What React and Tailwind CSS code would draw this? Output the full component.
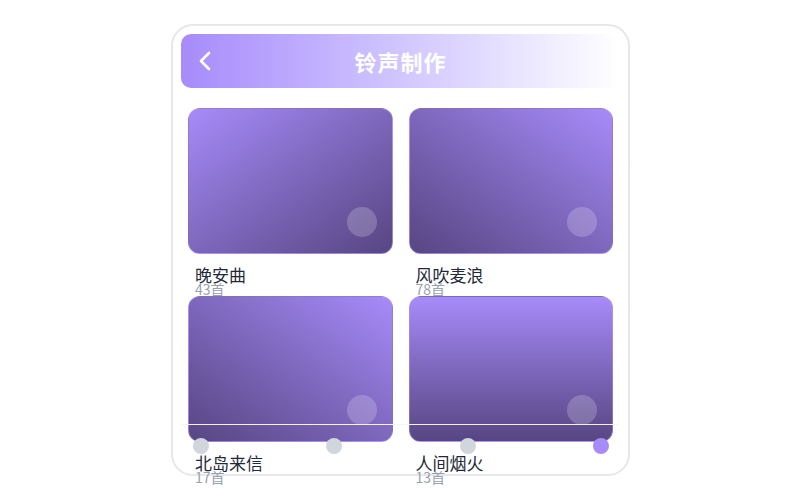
import React from 'react'

const FONT = { fontFamily: '"Noto Sans CJK SC", "Noto Sans", sans-serif' }

const ALBUMS = [
  { name: '晚安曲', count: '43首', bg: 'bg-gradient-to-br from-[#a78bfa] to-[#574683]' },
  { name: '风吹麦浪', count: '78首', bg: 'bg-gradient-to-bl from-[#a78bfa] to-[#574683]' },
  { name: '北岛来信', count: '17首', bg: 'bg-gradient-to-bl from-[#a78bfa] to-[#574683]' },
  { name: '人间烟火', count: '13首', bg: 'bg-gradient-to-b from-[#a78bfa] to-[#574683]' },
]

function AlbumCard({ album }) {
  return (
    <div>
      <div className={`relative h-[146px] rounded-xl border border-[#b9a8ee]/40 ${album.bg}`}>
        <div className="absolute right-[15px] bottom-[16px] w-[30px] h-[30px] rounded-full bg-white/20" />
      </div>
      <div className="pl-[7px] pt-[12px] h-[42px]">
        <div className="text-[17px] leading-[17px] text-gray-800">{album.name}</div>
        <div className="text-[14px] leading-[13px] text-gray-400">{album.count}</div>
      </div>
    </div>
  )
}

export default function App() {
  return (
    <div className="w-[800px] h-[500px] bg-white pt-6" style={FONT}>
      <div className="relative ml-[171px] w-[459px] h-[452px] border-2 border-gray-200 rounded-[22px] p-2">
        {/* Header */}
        <div className="relative h-[54px] rounded-[10px] bg-gradient-to-r from-[#a78bfa] to-white flex items-center justify-center">
          <svg className="absolute left-[18px] top-[17px]" width="12" height="20" viewBox="0 0 12 20" fill="none">
            <polyline points="10,2 2,10 10,18" stroke="white" strokeWidth="2.6" strokeLinecap="round" strokeLinejoin="round" />
          </svg>
          <span className="text-[22px] font-bold text-white tracking-[1px]">铃声制作</span>
        </div>

        {/* Grid */}
        <div className="mt-5 px-[7px] grid grid-cols-2 gap-x-4">
          {ALBUMS.map(a => <AlbumCard key={a.name} album={a} />)}
        </div>

        {/* Step indicator overlay */}
        <div className="absolute left-[9px] right-[10px] top-[398px] h-px bg-gray-100" />
        <div className="absolute left-[20px] right-[19px] top-[412px] flex justify-between">
          <span className="w-4 h-4 rounded-full bg-gray-300" />
          <span className="w-4 h-4 rounded-full bg-gray-300" />
          <span className="w-4 h-4 rounded-full bg-gray-300" />
          <span className="w-4 h-4 rounded-full bg-[#a78bfa]" />
        </div>
      </div>
    </div>
  )
}
